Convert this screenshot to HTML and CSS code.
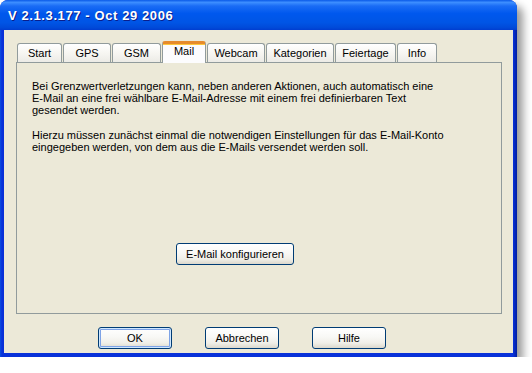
FILE: index.html
```html
<!DOCTYPE html>
<html lang="de">
<head>
  <meta charset="UTF-8" />
  <title>V 2.1.3.177 - Oct 29 2006</title>
  <link rel="stylesheet" href="styles.css">
</head>
<body>

  <div class="window">
    <div class="titlebar">V 2.1.3.177 - Oct 29 2006</div>

    <div class="client">
      <div class="tabs">
        <div class="tab">Start</div>
        <div class="tab">GPS</div>
        <div class="tab">GSM</div>
        <div class="tab active">Mail</div>
        <div class="tab">Webcam</div>
        <div class="tab">Kategorien</div>
        <div class="tab">Feiertage</div>
        <div class="tab">Info</div>
      </div>

      <div class="panel">
        <p>
          Bei Grenzwertverletzungen kann, neben anderen Aktionen, auch automatisch eine<br />
          E-Mail an eine frei wählbare E-Mail-Adresse mit einem frei definierbaren Text<br />
          gesendet werden.
        </p>
        <p>
          Hierzu müssen zunächst einmal die notwendigen Einstellungen für das E-Mail-Konto<br />
          eingegeben werden, von dem aus die E-Mails versendet werden soll.
        </p>
        <button class="btn btn-config">E-Mail konfigurieren</button>
      </div>

      <div class="dialog-buttons">
        <button class="btn default">OK</button>
        <button class="btn">Abbrechen</button>
        <button class="btn">Hilfe</button>
      </div>
    </div>
  </div>

</body>
</html>
```

FILE: styles.css
```css
body {
  margin: 0;
  padding: 0;
  background-color: #fff;
  font-family: 'Liberation Sans', Arial, sans-serif;
  font-size: 11px;
  color: #000;
}

.window {
  box-sizing: border-box;
  width: 517px;
  height: 357px;
  padding: 0 4px 4px;
  background: linear-gradient(to right, #0a4fe0 0, #0831d9 2px, #0831d9 513px, #001ea0 517px);
  border-radius: 8px 8px 0 0;
  box-shadow: 6px 6px 8px rgba(0, 0, 0, 0.4);
}

.titlebar {
  box-sizing: border-box;
  height: 30px;
  margin: 0 -4px;
  padding: 2px 0 0 8px;
  line-height: 28px;
  border-radius: 8px 8px 0 0;
  background: linear-gradient(to bottom,
    #0a5ae8 0%, #3d8eff 8%, #1a6cf5 20%, #0058ee 45%,
    #0055e5 75%, #004ad9 92%, #003dd0 100%);
  color: #fff;
  font-size: 13px;
  font-weight: bold;
  letter-spacing: 0.6px;
  text-shadow: 1px 1px 0 #0a1e8c;
}

.client {
  box-sizing: border-box;
  height: 323px;
  padding: 11px 11px 0 12px;
  background-color: #ece9d8;
}

/* Tabs */
.tabs {
  display: flex;
  align-items: flex-end;
  height: 21px;
  padding-left: 1px;
}

.tab {
  box-sizing: border-box;
  height: 19px;
  margin-right: 1px;
  border: 1px solid #919b9c;
  border-bottom: none;
  border-radius: 3px 3px 0 0;
  background: linear-gradient(to bottom, #fff 0%, #f7f6f2 50%, #ecebe6 100%);
  text-align: center;
  line-height: 18px;
}

.tab:nth-child(1) { width: 45px; }
.tab:nth-child(2) { width: 48px; }
.tab:nth-child(3) { width: 49px; }
.tab:nth-child(4) { width: 44px; }
.tab:nth-child(5) { width: 58px; }
.tab:nth-child(6) { width: 68px; }
.tab:nth-child(7) { width: 61px; }
.tab:nth-child(8) { width: 40px; }

.tab.active {
  position: relative;
  z-index: 1;
  height: 22px;
  margin-bottom: -1px;
  border-top: 3px solid #e68b2c;
  box-shadow: inset 0 1px 0 #ffc73c;
  background: #fcfcfe;
  line-height: 14px;
}

/* Panel */
.panel {
  box-sizing: border-box;
  width: 486px;
  height: 252px;
  padding: 17px 15px 0;
  border: 1px solid #919b9c;
  background-color: #ece9d8;
}

.panel p {
  margin: 0 0 13px;
  line-height: 12px;
  white-space: nowrap;
}

/* Buttons */
.btn {
  box-sizing: border-box;
  width: 74px;
  height: 22px;
  padding: 0;
  border: 1px solid #003c74;
  border-radius: 3px;
  background: linear-gradient(to bottom, #fff 0%, #f8f8f5 45%, #f0efe8 75%, #dcd8cc 100%);
  font-family: inherit;
  font-size: 11px;
  color: #000;
}

.btn.default {
  box-shadow: inset 0 0 0 1px #cee7ff, inset 0 0 0 2px #7ea3e6;
}

.btn-config {
  width: 118px;
  margin: 77px 0 0 144px;
}

.dialog-buttons {
  display: flex;
  gap: 33px;
  margin: 13px 0 0 82px;
}
```
